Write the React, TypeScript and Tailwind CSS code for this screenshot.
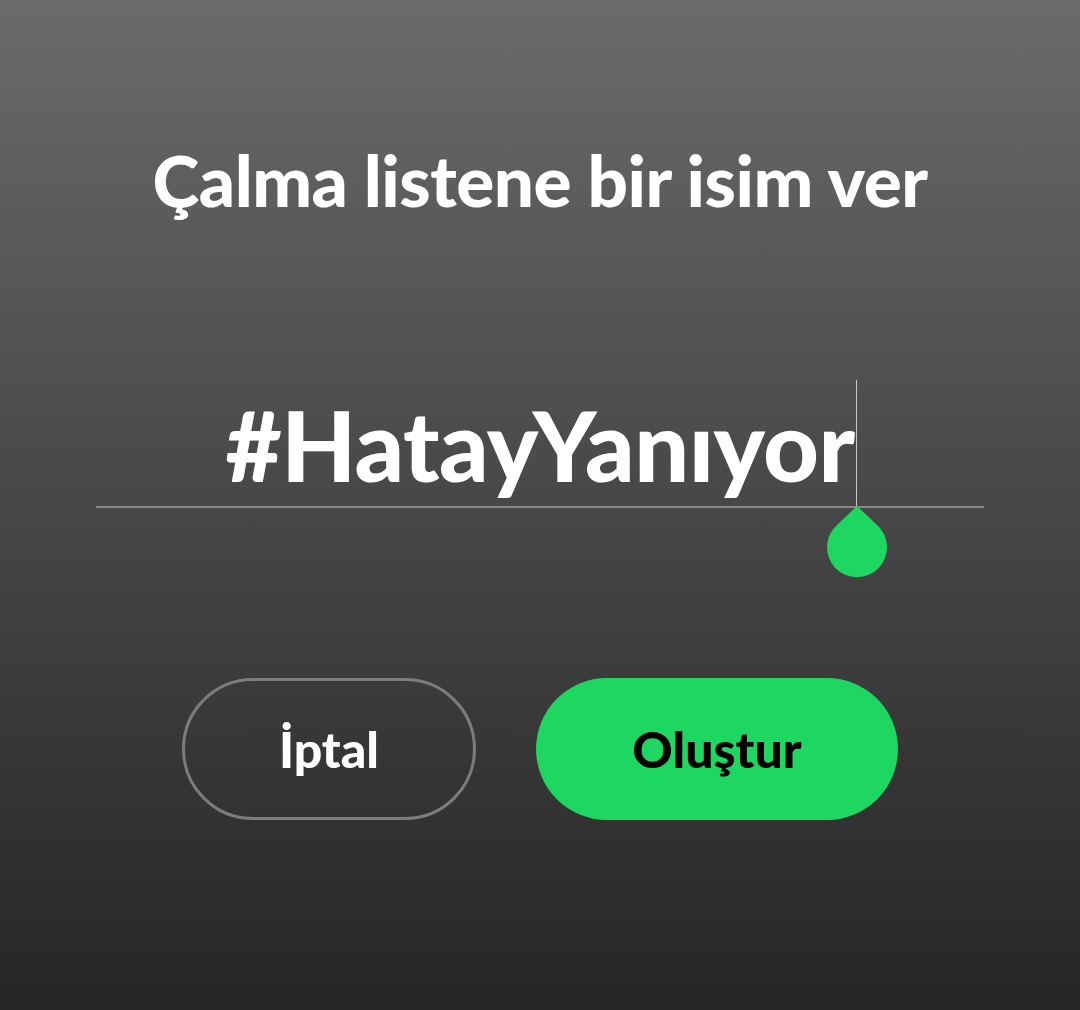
export default function App() {
  return (
    <div
      className="w-[1080px] h-[1010px] flex flex-col items-center bg-gradient-to-b from-[#6b6b6b] to-[#262626] text-white"
      style={{ fontFamily: 'Lato, "Noto Sans", sans-serif' }}
    >
      <h1 className="mt-[140px] text-[71px] leading-[80px] font-black tracking-[-0.5px]">
        Çalma listene bir isim ver
      </h1>

      {/* playlist name field */}
      <div className="mt-[160px] w-[888px] relative flex flex-col items-center">
        <div className="relative h-[126px] flex items-end">
          <span className="text-[97px] leading-[110px] font-black tracking-[-0.5px] pb-[6px]">
            #HatayYanıyor
          </span>
          <span className="absolute right-[-2px] top-0 bottom-0 w-px bg-[#c8c8c8]" />
          <svg
            className="absolute right-[-32px] top-[126px]"
            width="60"
            height="72"
            viewBox="0 0 60 72"
          >
            <path d="M30 0 L49 18 A30 30 0 1 1 11 18 Z" fill="#1ed760" />
          </svg>
        </div>
        <div className="w-full h-[2px] bg-[#8a8a8a]" />
      </div>

      <div className="mt-[170px] flex gap-[60px]">
        <button className="w-[294px] h-[142px] rounded-full border-[3px] border-[#7c7c7c] text-[50px] font-black text-white">
          İptal
        </button>
        <button className="w-[362px] h-[142px] rounded-full bg-[#1ed760] text-[50px] font-black text-black">
          Oluştur
        </button>
      </div>
    </div>
  );
}
